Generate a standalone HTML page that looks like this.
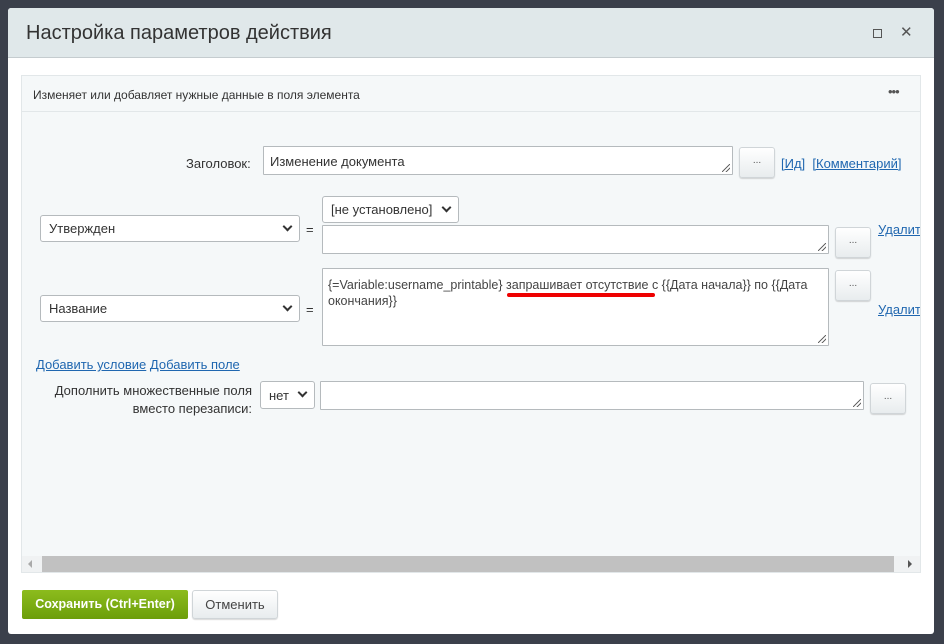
<!DOCTYPE html>
<html><head><meta charset="utf-8"><style>
*{box-sizing:border-box;margin:0;padding:0}
body{width:944px;height:644px;background:#3b404b;font-family:"Liberation Sans",sans-serif;position:relative;overflow:hidden;font-size:13px;color:#333}
.a{position:absolute}
.dlg{left:8px;top:8px;width:926px;height:626px;background:#fff;border-radius:3px;overflow:hidden}
.hdr{left:0;top:0;width:926px;height:50px;background:#e0e8ea;border-bottom:1px solid #c5cccf}
.inp{background:#fff;border:1px solid #b5babd;border-radius:1px}
.sel{background:#fff;border:1px solid #b5babd;border-radius:3px;font-size:13px;color:#333;padding-left:8px;display:flex;align-items:center}
.chev{position:absolute;right:8px;top:50%;margin-top:-4px;width:7px;height:7px;border-right:2px solid #333;border-bottom:2px solid #333;transform:rotate(45deg);margin-top:-6px}
.btn{background:linear-gradient(#fff,#e8ecee);border:1px solid #d0d5d8;border-radius:3px;box-shadow:0 1px 1px rgba(0,0,0,.15);font-size:10px;text-align:center;color:#555}
.rz{position:absolute;right:2px;bottom:2px;width:8px;height:8px;background:linear-gradient(135deg,transparent 45%,#666 45%,#666 55%,transparent 55%,transparent 70%,#666 70%,#666 80%,transparent 80%)}
a{color:#2067b0;text-decoration:underline}
</style></head><body>
<div class="a dlg">
 <div class="a hdr"><div class="a" style="left:18px;top:14px;font-size:20px;color:#333">Настройка параметров действия</div>
 <div class="a" style="left:865px;top:21px;width:9px;height:9px;border:1px solid #555"></div>
 <div class="a" style="left:892px;top:15px;font-size:15px;color:#555">✕</div></div>
 <div class="a" style="left:13px;top:67px;width:900px;height:498px;background:#f5f8f9;border:1px solid #e2e7e9"></div>
 <div class="a" style="left:14px;top:68px;width:898px;height:36px;border-bottom:1px solid #e2e7e9"></div>
 <div class="a" style="left:25px;top:80px;font-size:12px">Изменяет или добавляет нужные данные в поля элемента</div>
 <div class="a" style="left:880px;top:76px;font-size:13px;color:#555;letter-spacing:-1px">•••</div>
</div>
<div class="a" style="left:186px;top:156px">Заголовок:</div>
<div class="a inp" style="left:263px;top:146px;width:470px;height:29px"><span class="a" style="left:6px;top:7px">Изменение документа</span><div class="rz"></div></div>
<div class="a btn" style="left:739px;top:147px;width:36px;height:31px;line-height:26px">...</div>
<div class="a" style="left:781px;top:156px"><a>[Ид]</a>&nbsp; <a>[Комментарий]</a></div>

<div class="a sel" style="left:322px;top:196px;width:137px;height:27px">[не установлено]<div class="chev"></div></div>
<div class="a sel" style="left:40px;top:215px;width:260px;height:27px">Утвержден<div class="chev"></div></div>
<div class="a" style="left:306px;top:222px">=</div>
<div class="a inp" style="left:322px;top:225px;width:507px;height:29px"><div class="rz"></div></div>
<div class="a btn" style="left:835px;top:227px;width:36px;height:31px;line-height:26px">...</div>
<div class="a" style="left:878px;top:222px;width:42px;overflow:hidden;white-space:nowrap"><a>Удалить</a></div>

<div class="a inp" style="left:322px;top:268px;width:507px;height:78px;font-size:12.5px;color:#444;padding:8px 5px;line-height:16px">{=Variable:username_printable} запрашивает отсутствие с {{Дата начала}} по {{Дата окончания}}<div class="rz"></div></div>
<div class="a" style="left:507px;top:293px;width:148px;height:4px;background:#e00;border-radius:2px"></div>
<div class="a btn" style="left:835px;top:270px;width:36px;height:31px;line-height:26px">...</div>
<div class="a sel" style="left:40px;top:295px;width:260px;height:27px">Название<div class="chev"></div></div>
<div class="a" style="left:306px;top:302px">=</div>
<div class="a" style="left:878px;top:302px;width:42px;overflow:hidden;white-space:nowrap"><a>Удалить</a></div>

<div class="a" style="left:36px;top:357px"><a>Добавить условие</a> <a>Добавить поле</a></div>
<div class="a" style="left:30px;top:382px;width:222px;text-align:right;line-height:18px">Дополнить множественные поля вместо перезаписи:</div>
<div class="a sel" style="left:260px;top:381px;width:55px;height:28px">нет<div class="chev"></div></div>
<div class="a inp" style="left:320px;top:381px;width:544px;height:29px"><div class="rz"></div></div>
<div class="a btn" style="left:870px;top:383px;width:36px;height:31px;line-height:26px">...</div>

<div class="a" style="left:22px;top:556px;width:898px;height:16px;background:#f0f2f3"></div>
<div class="a" style="left:42px;top:556px;width:852px;height:16px;background:#c1c1c1"></div>
<div class="a" style="left:28px;top:560px;width:0;height:0;border-right:4px solid #aaa;border-top:4px solid transparent;border-bottom:4px solid transparent"></div>
<div class="a" style="left:908px;top:560px;width:0;height:0;border-left:4px solid #555;border-top:4px solid transparent;border-bottom:4px solid transparent"></div>

<div class="a" style="left:22px;top:590px;width:166px;height:29px;background:linear-gradient(#8cbc1d,#6c9e0a);border-radius:2px;color:#fff;font-weight:bold;font-size:12.5px;text-align:center;line-height:29px">Сохранить (Ctrl+Enter)</div>
<div class="a btn" style="left:192px;top:590px;width:86px;height:29px;line-height:27px;font-size:13px;color:#444">Отменить</div>
</body></html>
